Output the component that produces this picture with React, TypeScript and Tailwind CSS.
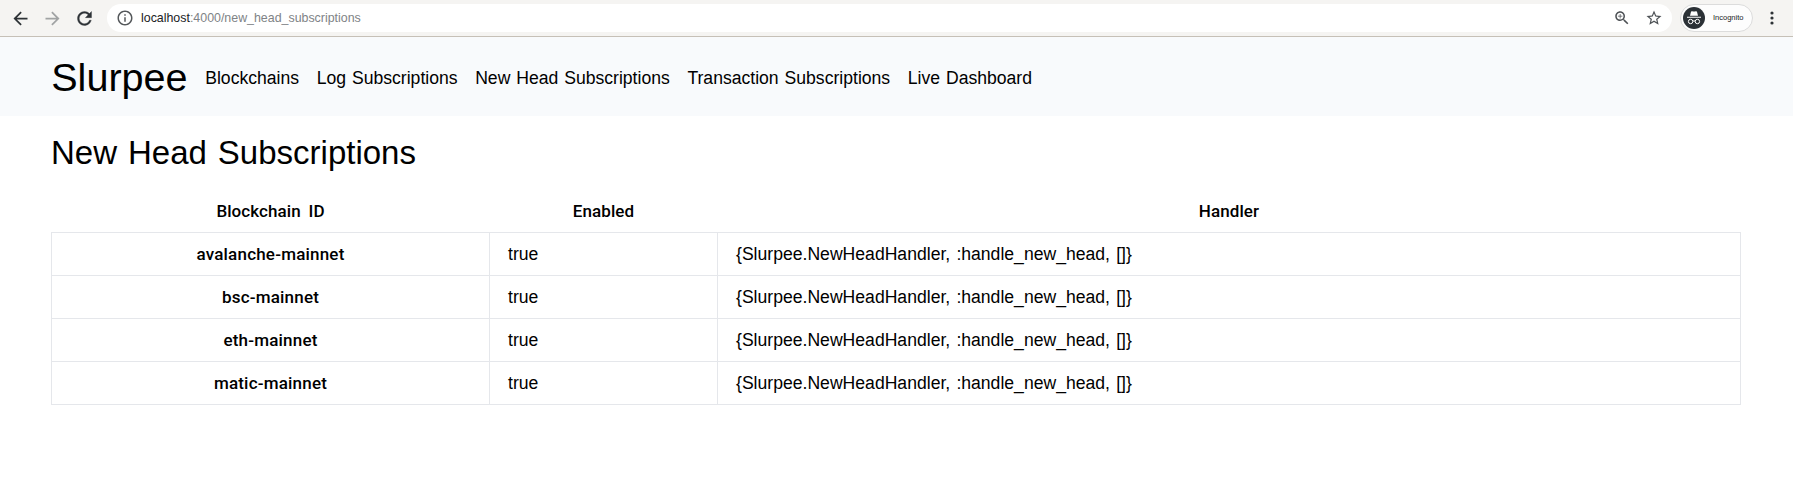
import React from "react";

const ids = ["avalanche-mainnet", "bsc-mainnet", "eth-mainnet", "matic-mainnet"];
const links = ["Blockchains", "Log Subscriptions", "New Head Subscriptions", "Transaction Subscriptions", "Live Dashboard"];

function Toolbar() {
  return (
    <div className="flex h-[37px] items-center border-b border-[#c6c0b7] bg-[#f5f4f2]">
      <svg className="ml-[10px] size-[21px]" viewBox="0 0 24 24" fill="#2d3236"><path d="M20 11H7.83l5.59-5.59L12 4l-8 8 8 8 1.41-1.41L7.83 13H20v-2z" /></svg>
      <svg className="ml-[11px] size-[21px]" viewBox="0 0 24 24" fill="#a1a3a4"><path d="M12 4l-1.41 1.41L16.17 11H4v2h12.17l-5.58 5.59L12 20l8-8z" /></svg>
      <svg className="ml-[11px] size-[21px]" viewBox="0 0 24 24" fill="#2d3236" stroke="#2d3236" strokeWidth="0.4"><path d="M17.65 6.35C16.2 4.9 14.21 4 12 4c-4.42 0-7.99 3.58-7.99 8s3.57 8 7.99 8c3.73 0 6.84-2.55 7.73-6h-2.08c-.82 2.33-3.04 4-5.65 4-3.31 0-6-2.69-6-6s2.69-6 6-6c1.66 0 3.14.69 4.22 1.78L13 11h7V4l-2.35 2.35z" /></svg>
      <div className="ml-[12px] flex h-7 w-[1565px] items-center rounded-full bg-white">
        <svg className="ml-[9px] size-[18px]" viewBox="0 0 24 24" fill="#55585b"><path d="M11 7h2v2h-2zm0 4h2v6h-2zm1-9C6.48 2 2 6.48 2 12s4.48 10 10 10 10-4.48 10-10S17.520 2 12 2zm0 18c-4.41 0-8-3.59-8-8s3.590-8 8-8 8 3.590 8 8-3.590 8-8 8z" /></svg>
        <span className="ml-[7px] text-[12.4px] text-[#808386]"><span className="text-[#202124]">localhost</span>:4000/new_head_subscriptions</span>
        <svg className="ml-auto size-[18px]" viewBox="0 0 24 24" fill="#4d5155"><path d="M15.500 14h-.79l-.28-.27C15.410 12.590 16 11.110 16 9.500 16 5.910 13.090 3 9.500 3S3 5.910 3 9.500 5.910 16 9.500 16c1.610 0 3.090-.59 4.230-1.570l.27.28v.79l5 4.990L20.490 19l-4.990-5zm-6 0C7.010 14 5 11.990 5 9.500S7.010 5 9.500 5 14 7.010 14 9.500 11.990 14 9.500 14zm3-4h-2.500v2.500H9V10H6.500V9H9V6.500h1V9h2.500v1z" /></svg>
        <svg className="ml-[14px] mr-[9px] size-[18px]" viewBox="0 0 24 24" fill="#4d5155"><path d="M22 9.240l-7.190-.62L12 2 9.190 8.630 2 9.240l5.460 4.730L5.820 21 12 17.270 18.180 21l-1.630-7.030L22 9.240zM12 15.400l-3.760 2.270 1-4.280-3.320-2.880 4.380-.38L12 6.100l1.710 4.040 4.380.38-3.320 2.880 1 4.280L12 15.400z" /></svg>
      </div>
      <div className="ml-2 flex h-7 w-[73px] items-center rounded-full border border-[#dcdcdc] bg-[#fdfdfd]">
        <svg className="ml-[2px] size-[22px]" viewBox="0 0 22 22">
          <circle cx="11" cy="11" r="11" fill="#2b3136" />
          <path d="M7 8.800l1-4q.3-.9 1.200-.6 1.800.5 3.600 0 .9-.3 1.200.6l1 4zM4 9.800h14v1H4z" fill="#fff" />
          <g fill="none" stroke="#fff"><circle cx="7.600" cy="14.500" r="2.200" /><circle cx="14.400" cy="14.500" r="2.200" /><path d="M9.800 14.200q1.200-.7 2.400 0" /></g>
        </svg>
        <span className="ml-[8px] text-[7.500px] text-[#202124]">Incognito</span>
      </div>
      <svg className="ml-[9px] size-5" viewBox="0 0 20 20" fill="#2d3236"><circle cx="10" cy="5" r="1.600" /><circle cx="10" cy="10" r="1.600" /><circle cx="10" cy="15" r="1.600" /></svg>
    </div>
  );
}

export default function App() {
  return (
    <div className="min-h-[478px] bg-white font-['Liberation_Sans',Arial,sans-serif] text-[17.6px] leading-[26px] text-black">
      <Toolbar />
      <nav className="flex h-[79px] items-center gap-[17.6px] bg-[#f8fafc] pl-[51.200px] [word-spacing:1px]">
        <a className="text-[39.6px] leading-[44px]">Slurpee</a>
        {links.map((l) => <a key={l} className="whitespace-nowrap pt-0.5">{l}</a>)}
      </nav>
      <main className="pl-[51px] pt-[17px]">
        <h1 className="text-[33px] leading-[40px] [word-spacing:1.800px]">New Head Subscriptions</h1>
        <table className="mt-[14px] w-[1690px] table-fixed border-collapse">
          <colgroup><col className="w-[438px]" /><col className="w-[228px]" /><col /></colgroup>
          <thead>
            <tr className="h-[45px] font-['Roboto',sans-serif] [word-spacing:3.500px]">
              {["Blockchain ID", "Enabled", "Handler"].map((h) => <th key={h} className="px-0 pb-0 pt-[3px] text-[17px] font-medium tracking-[0.08px]">{h}</th>)}
            </tr>
          </thead>
          <tbody>
            {ids.map((id) => (
              <tr key={id} className="h-[43px]">
                <th className="border border-[#e5e7eb] p-0 font-['Roboto',sans-serif] text-[17px] font-medium tracking-[0.2px]">{id}</th>
                <td className="border border-[#e5e7eb] py-0 pl-[18px] pr-0">true</td>
                <td className="border border-[#e5e7eb] py-0 pl-[18px] pr-0 [word-spacing:1.300px]">{"{Slurpee.NewHeadHandler, :handle_new_head, []}"}</td>
              </tr>
            ))}
          </tbody>
        </table>
      </main>
    </div>
  );
}
